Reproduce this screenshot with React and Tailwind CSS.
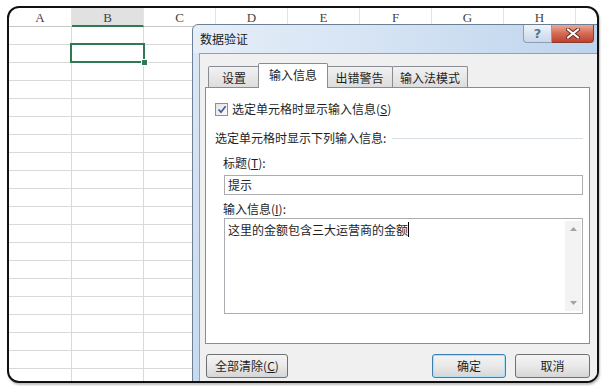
import React from 'react';

const columns = [
  { key: 'A', w: 'w-[63px]' },
  { key: 'B', w: 'w-[72px]' },
  { key: 'C', w: 'w-[72px]' },
  { key: 'D', w: 'w-[72px]' },
  { key: 'E', w: 'w-[72px]' },
  { key: 'F', w: 'w-[72px]' },
  { key: 'G', w: 'w-[72px]' },
  { key: 'H', w: 'w-[72px]' },
  { key: 'I', w: 'w-[72px]', hidden: true },
];

const rows = Array.from({ length: 20 }, (_, i) => i + 1);

function Sheet() {
  return (
    <div className="flex flex-col">
      {/* column headers */}
      <div className="flex h-[19px] shrink-0">
        {columns.map((c) => (
          <div
            key={c.key}
            className={`${c.w} shrink-0 flex items-center justify-center pt-[2px] border-r border-r-[#e4e4e4] text-[13px] text-[#444] font-[family-name:'Liberation_Serif',serif] ${
              c.key === 'B' ? 'bg-[#e1e1e1] border-b-2 border-b-[#2f7a52] text-[#2f6f4c]' : 'border-b border-b-[#c6c6c6]'
            }`}
          >
            {c.hidden ? null : c.key}
          </div>
        ))}
      </div>
      {rows.map((r) => (
        <div key={r} className="flex h-[18px] shrink-0">
          {columns.map((c) => (
            <div key={c.key} className={`${c.w} shrink-0 border-r border-b border-[#d9d9d9]`} />
          ))}
        </div>
      ))}
    </div>
  );
}

function Btn({ children, primary, className = '' }) {
  return (
    <div
      className={`h-[24px] flex items-center justify-center rounded-[3px] border text-[12px] leading-[16px] text-[#1e1e1e] bg-gradient-to-b from-[#f4f4f4] via-[#e9e9e9] to-[#d6d6d6] ${
        primary ? 'border-[#3c7fb1] shadow-[inset_0_0_0_1px_#aee0f8]' : 'border-[#707070]'
      } ${className}`}
    >
      {children}
    </div>
  );
}

function Tab({ children, active, className = '' }) {
  if (active) {
    return (
      <div className={`relative z-10 h-[25px] -mb-px flex items-center justify-center bg-white border border-b-0 border-[#898c95] rounded-t-[2px] pb-[3px] ${className}`}>
        {children}
      </div>
    );
  }
  return (
    <div className={`h-[22px] -mb-px flex items-center justify-center border border-b-0 border-[#898c95] rounded-t-[2px] bg-gradient-to-b from-[#f2f2f2] to-[#dcdcdc] ${className}`}>
      {children}
    </div>
  );
}

function Dialog() {
  return (
    <div className="absolute left-[183px] top-[16px] w-[420px] h-[380px] flex flex-col rounded-t-[6px] border border-[#6d7f95] bg-gradient-to-b from-[#dce8f5] to-[#c6d9ee] text-[12px] leading-[16px] text-[#1e1e1e] font-[family-name:'Noto_Sans_CJK_SC',sans-serif]">
      {/* title bar */}
      <div className="h-[28px] shrink-0 flex items-start bg-gradient-to-r from-[#e6eef8] via-[#d3e2f3] to-[#bcd3ec] rounded-t-[6px]">
        <div className="pl-[7px] pt-[6px] text-[#1a1a1a]">数据验证</div>
        <div className="flex-1" />
        <div className="flex mr-[17px]">
          <div className="w-[29px] h-[18px] flex items-center justify-center border border-[#8d9db3] border-t-0 rounded-bl-[4px] bg-gradient-to-b from-[#eef3f9] to-[#c9d8ea] text-[13px] font-bold text-[#5e718a] leading-[14px] font-[family-name:'DejaVu_Sans',sans-serif]">
            ?
          </div>
          <div className="w-[42px] h-[18px] flex items-center justify-center border border-[#8a3b2e] border-t-0 border-l-0 rounded-br-[4px] bg-gradient-to-b from-[#e9a996] via-[#d46a55] to-[#c0402c]">
            <svg width="14" height="11" viewBox="0 0 14 11">
              <path d="M2 1.5 L12 9.5 M12 1.5 L2 9.5" stroke="#6b2a20" strokeWidth="4" strokeLinecap="round" />
              <path d="M2 1.5 L12 9.5 M12 1.5 L2 9.5" stroke="#ffffff" strokeWidth="2.2" strokeLinecap="round" />
            </svg>
          </div>
        </div>
      </div>

      {/* body */}
      <div className="flex-1 ml-[6px] border-l border-t border-[#8da2ba] bg-[#f0f0f0] pl-[5px] pt-[9px] flex flex-col">
        {/* tabs */}
        <div className="flex items-end pl-[3px] h-[24px] shrink-0">
          <Tab className="w-[52px]">设置</Tab>
          <Tab active className="w-[70px] -mx-[2px]">输入信息</Tab>
          <Tab className="w-[67px]">出错警告</Tab>
          <Tab className="w-[76px] -ml-px">输入法模式</Tab>
        </div>

        {/* panel */}
        <div className="w-[385px] h-[257px] shrink-0 border border-[#898c95] bg-white flex flex-col pl-[9px]">
          <div className="mt-[14px] h-[14px] flex items-center gap-[4px]">
            <div className="w-[13px] h-[13px] border border-[#8f8f8f] bg-gradient-to-br from-[#e4e4e4] to-[#fbfbfb] flex items-center justify-center">
              <svg width="10" height="9" viewBox="0 0 10 9">
                <path d="M1.5 4.5 L4 7.2 L8.6 1.2" stroke="#4a5f97" strokeWidth="1.8" fill="none" />
              </svg>
            </div>
            <span>
              选定单元格时显示输入信息(<span className="underline">S</span>)
            </span>
          </div>

          <div className="mt-[14px] h-[16px] flex items-center pr-[6px]">
            <span>选定单元格时显示下列输入信息:</span>
            <div className="flex-1 ml-[6px] h-px bg-[#d5dfe5]" />
          </div>

          <div className="mt-[9px] h-[16px] flex items-center pl-[8px]">
            标题(<span className="underline">T</span>):
          </div>
          <div className="mt-[4px] ml-[9px] w-[359px] h-[20px] border border-[#abadb3] flex items-center pl-[3px]">
            提示
          </div>

          <div className="mt-[6px] h-[16px] flex items-center pl-[8px]">
            输入信息(<span className="underline">I</span>):
          </div>
          <div className="mt-px ml-[9px] w-[359px] h-[96px] border border-[#abadb3] flex">
            <div className="flex-1 pl-[3px] pt-[3px] flex items-start">
              <span>这里的金额包含三大运营商的金额</span>
              <span className="w-px h-[15px] bg-black" />
            </div>
            <div className="w-[16px] mr-px my-[2px] bg-[#f3f3f3] flex flex-col justify-between items-center py-[6px]">
              <svg width="7" height="4" viewBox="0 0 7 4">
                <path d="M0 4 L3.5 0 L7 4 Z" fill="#a3a3a3" />
              </svg>
              <svg width="7" height="4" viewBox="0 0 7 4">
                <path d="M0 0 L3.5 4 L7 0 Z" fill="#a3a3a3" />
              </svg>
            </div>
          </div>
        </div>

        {/* buttons */}
        <div className="mt-[10px] w-[385px] flex items-center">
          <Btn className="w-[82px] ml-px">
            全部清除(<span className="underline">C</span>)
          </Btn>
          <div className="flex-1" />
          <Btn primary className="w-[74px]">确定</Btn>
          <Btn className="w-[75px] ml-[9px]">取消</Btn>
        </div>
      </div>
    </div>
  );
}

export default function App() {
  return (
    <div className="w-[608px] h-[389px] bg-white overflow-hidden pl-[7px] pt-[6px]">
      <div className="relative w-[592px] h-[377px] border-2 border-[#111] rounded-[12px] overflow-hidden bg-white shadow-[1px_2px_2px_rgba(0,0,0,0.25)]">
        <Sheet />
        {/* selected cell B2 */}
        <div className="absolute left-[61px] top-[35px] w-[75px] h-[20px] border-2 border-[#2f7a52]">
          <div className="absolute -right-[5px] -bottom-[5px] w-[7px] h-[7px] bg-[#2f7a52] border border-white" />
        </div>
        <Dialog />
      </div>
    </div>
  );
}
